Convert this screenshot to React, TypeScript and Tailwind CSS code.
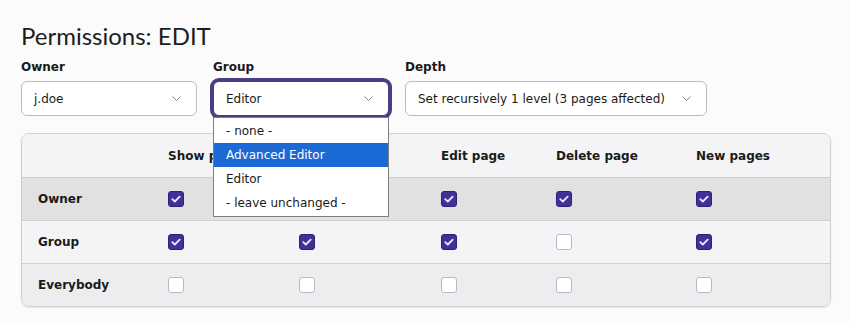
import React from 'react';

const COLS = ['Show page', 'Edit content', 'Edit page', 'Delete page', 'New pages'];

const ROWS = [
  { name: 'Owner', bg: 'bg-[#e1e1e1]', values: [true, true, true, true, true] },
  { name: 'Group', bg: 'bg-[#f4f4f6]', values: [true, true, true, false, true] },
  { name: 'Everybody', bg: 'bg-[#ededf0]', values: [false, false, false, false, false] },
];

const GROUP_OPTIONS = ['- none -', 'Advanced Editor', 'Editor', '- leave unchanged -'];

function Chevron() {
  return (
    <svg width="9" height="5" viewBox="0 0 9 5" className="shrink-0">
      <path d="M0.5 0.5L4.5 4.5L8.5 0.5" fill="none" stroke="#8a8a8a" strokeWidth="1" />
    </svg>
  );
}

function Checkbox({ checked }: { checked: boolean }) {
  if (checked) {
    return (
      <span className="flex h-[16px] w-[16px] items-center justify-center rounded-[3px] border border-[#2e2173] bg-[#42309a]">
        <svg width="10" height="8" viewBox="0 0 10 8">
          <path d="M1.3 4.2L3.8 6.5L8.7 1.6" fill="none" stroke="#ece8fb" strokeWidth="1.8" strokeLinecap="round" strokeLinejoin="round" />
        </svg>
      </span>
    );
  }
  return <span className="block h-[16px] w-[16px] rounded-[3px] border border-[#b9b9c2] bg-white" />;
}

function Field({ label, width, value, focused, children }: any) {
  return (
    <div className={`relative ${width}`}>
      <div className="mb-[7px] text-[12px] font-bold leading-[14px] text-[#1a1a1a]">{label}</div>
      <div
        className={
          'flex h-[35px] items-center justify-between rounded-[6px] bg-white pl-[12px] pr-[15px] ' +
          (focused ? 'border border-[#4a3d84] ring-[3px] ring-[#4a3d84]' : 'border border-[#bdbdbd]')
        }
      >
        <span className="whitespace-nowrap">{value}</span>
        <Chevron />
      </div>
      {children}
    </div>
  );
}

export default function App() {
  return (
    <div className="min-h-screen bg-[#fbfbfb] px-[21px] pt-[21px] font-['DejaVu_Sans',Verdana,sans-serif] text-[12px] text-[#1a1a1a]">
      <h1 className="font-['Lato',sans-serif] text-[24px] leading-[30px] text-[#1d1d1d]">Permissions: EDIT</h1>

      <div className="mt-[9px] flex gap-[16px]">
        <Field label="Owner" width="w-[176px]" value="j.doe" />
        <Field label="Group" width="w-[176px]" value="Editor" focused>
          <div className="absolute left-0 top-[57px] z-10 w-[176px] border border-[#7f7f7f] bg-white py-[1px]">
            {GROUP_OPTIONS.map((o) => (
              <div
                key={o}
                className={
                  'flex h-[24px] items-center pl-[12px] ' +
                  (o === 'Advanced Editor' ? 'bg-[#1b69d5] text-white' : 'text-[#1a1a1a]')
                }
              >
                {o}
              </div>
            ))}
          </div>
        </Field>
        <Field label="Depth" width="w-[302px]" value="Set recursively 1 level (3 pages affected)" />
      </div>

      <div className="mt-[17px] w-[810px] overflow-hidden rounded-[8px] border border-[#cfcfd2] shadow-[0_1px_2px_rgba(0,0,0,0.08)]">
        <div className="grid h-[43px] grid-cols-[130px_131px_142px_115px_140px_1fr] items-center bg-[#f4f4f6] font-bold">
          <div />
          {COLS.map((c) => (
            <div key={c} className="whitespace-nowrap pl-[16px]">{c}</div>
          ))}
        </div>
        {ROWS.map((r) => (
          <div
            key={r.name}
            className={`grid h-[43px] grid-cols-[130px_131px_142px_115px_140px_1fr] items-center border-t border-[#cfcfd2] ${r.bg}`}
          >
            <div className="pl-[16px] font-bold">{r.name}</div>
            {r.values.map((v, i) => (
              <div key={i} className="pl-[16px]">
                <Checkbox checked={v} />
              </div>
            ))}
          </div>
        ))}
      </div>
    </div>
  );
}
